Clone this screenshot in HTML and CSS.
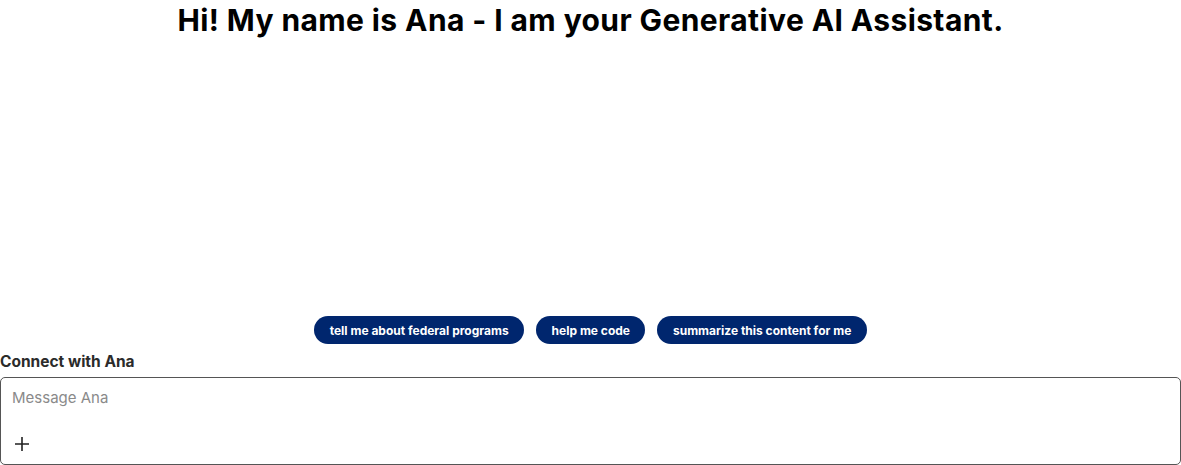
FILE: index.html
```html
<!DOCTYPE html>
<html lang="en">
<head>
<meta charset="utf-8">
<title>Ana</title>
<link rel="stylesheet" href="styles.css">
</head>
<body>
<div class="page">
  <h1 class="title">Hi! My name is Ana - I am your Generative AI Assistant.</h1>
  <div class="spacer"></div>
  <div class="chips">
    <button class="chip">tell me about federal programs</button>
    <button class="chip">help me code</button>
    <button class="chip">summarize this content for me</button>
  </div>
  <label class="label" for="msg">Connect with Ana</label>
  <div class="box">
    <textarea id="msg" class="input" placeholder="Message Ana"></textarea>
    <button class="plus" aria-label="Add">
      <svg width="16" height="16" viewBox="0 0 16 16"><path d="M8 1v14M1 8h14" stroke="#222" stroke-width="1.6" fill="none"/></svg>
    </button>
  </div>
</div>
</body>
</html>
```

FILE: styles.css
```css
* { box-sizing: border-box; }
html, body { margin: 0; padding: 0; background: #fff; }
body { font-family: Inter, "Open Sans", Arial, sans-serif; color: #111; }
.page { height: 465px; display: flex; flex-direction: column; }
.title { margin: 0; padding-top: 2px; text-align: center; font-size: 30px; font-weight: 700; line-height: 37px; letter-spacing: 0.4px; color: #000; }
.spacer { flex: 1; }
.chips { display: flex; justify-content: center; gap: 12px; margin-bottom: 9px; }
.chip { height: 28px; padding: 0 15.5px; border: none; border-radius: 14px; background: #00266e; color: #fff; font-family: inherit; font-size: 12px; font-weight: 700; cursor: pointer; }
.label { display: block; font-size: 15.5px; font-weight: 700; color: #2b2b2b; line-height: 18px; margin-bottom: 6px; }
.box { height: 88px; border: 1px solid #555; border-radius: 5px; display: flex; flex-direction: column; padding: 10px 11px 10px 11px; }
.input { border: none; outline: none; resize: none; flex: 1; font-family: inherit; font-size: 15px; padding: 0; color: #333; }
.input::placeholder { color: #8a8a8a; }
.plus { border: none; background: none; padding: 0 0 0 2px; width: 20px; height: 20px; display: flex; align-items: center; }
```
